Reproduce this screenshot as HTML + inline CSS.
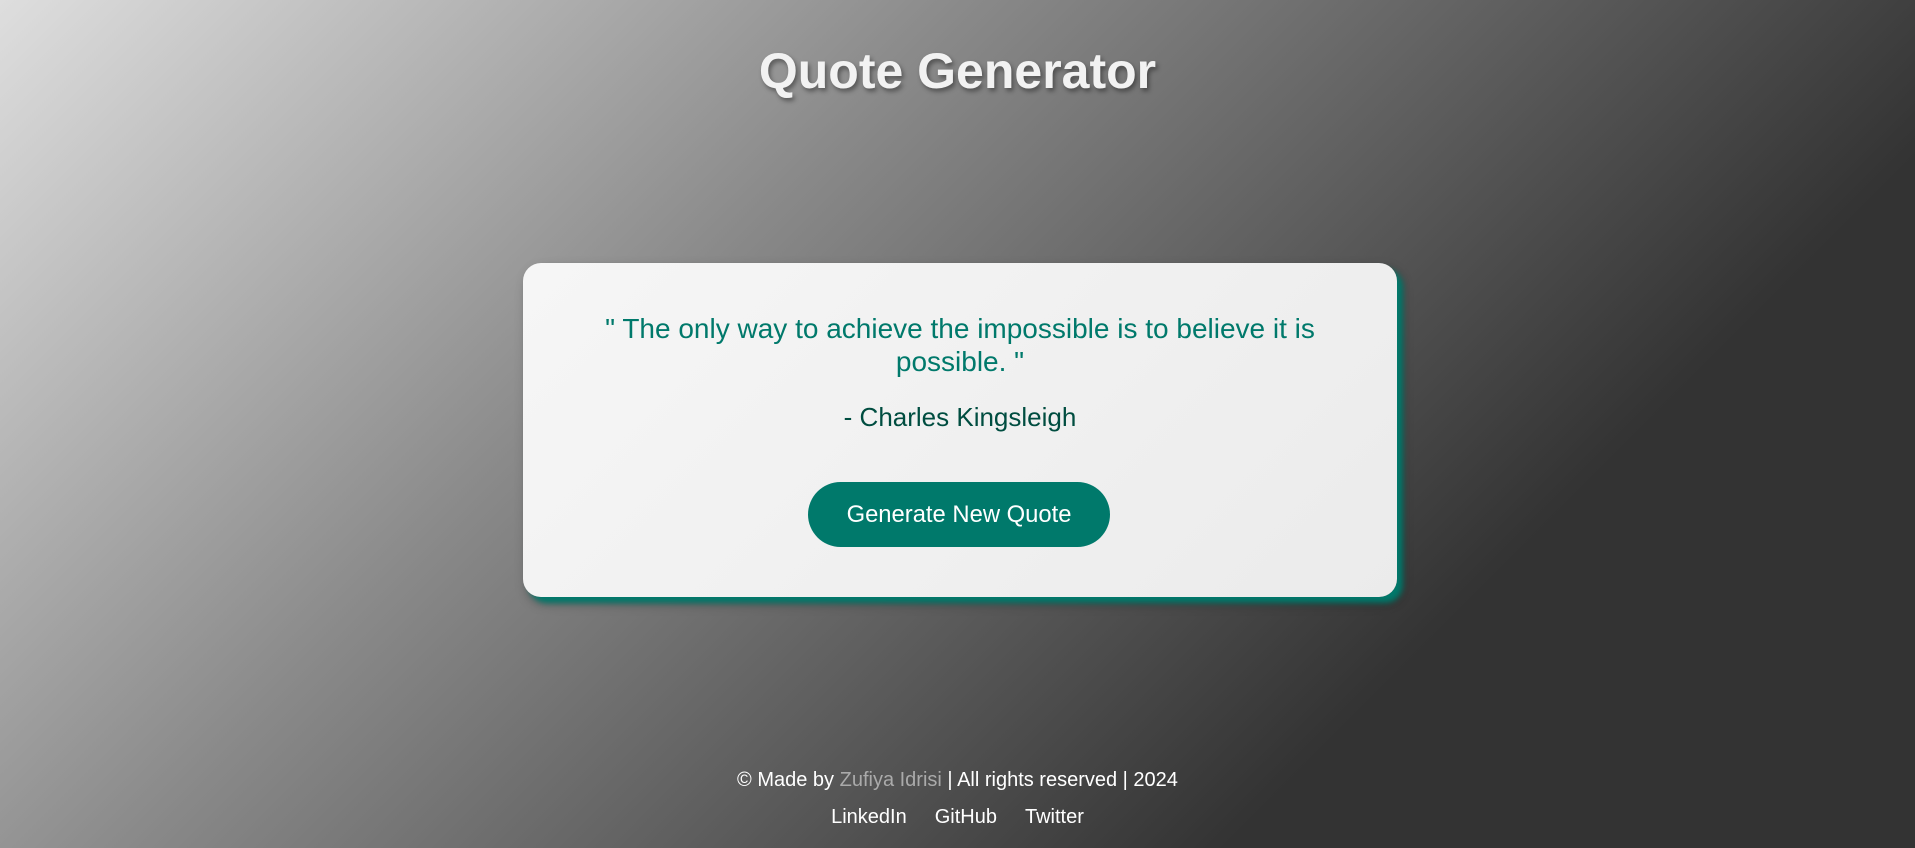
<!DOCTYPE html>
<html><head><meta charset="utf-8"><style>
html,body{margin:0;padding:0;width:1915px;height:848px;overflow:hidden}
body{background:linear-gradient(135deg,#dedede 0%,#8a8a8a 35%,#333 75%,#333 100%);font-family:"Liberation Sans",Arial,sans-serif;position:relative}
h1{position:absolute;top:42px;left:0;width:100%;text-align:center;margin:0;font-size:50px;color:#f2f2f2;text-shadow:2px 3px 5px rgba(0,0,0,.4);font-weight:bold}
.card{position:absolute;left:523px;top:263px;width:874px;height:334px;border-radius:18px;background:linear-gradient(135deg,#f6f6f6,#ebebeb);box-shadow:6px 6px 6px #00796b,4px 6px 12px rgba(0,0,0,.3);text-align:center}
.q{position:absolute;top:49px;left:60px;right:60px;font-size:28px;line-height:33px;color:#00796b}
.a{position:absolute;top:139px;left:0;right:0;font-size:26px;color:#004d40}
.btn{position:absolute;left:285px;top:219px;width:302px;height:65px;border-radius:33px;background:#00796b;color:#fff;font-size:23.8px;line-height:65px}
.f{position:absolute;left:0;width:100%;text-align:center;color:#fff;font-size:20px}
.f span{color:#aaa}
</style></head><body>
<h1>Quote Generator</h1>
<div class="card">
<div class="q">" The only way to achieve the impossible is to believe it is possible. "</div>
<div class="a">- Charles Kingsleigh</div>
<div class="btn">Generate New Quote</div>
</div>
<div class="f" style="top:769px">© Made by <span>Zufiya Idrisi</span> | All rights reserved | 2024</div>
<div class="f" style="top:806px"><span style="color:#fff;margin-right:28px">LinkedIn</span><span style="color:#fff;margin-right:28px">GitHub</span><span style="color:#fff">Twitter</span></div>
</body></html>
